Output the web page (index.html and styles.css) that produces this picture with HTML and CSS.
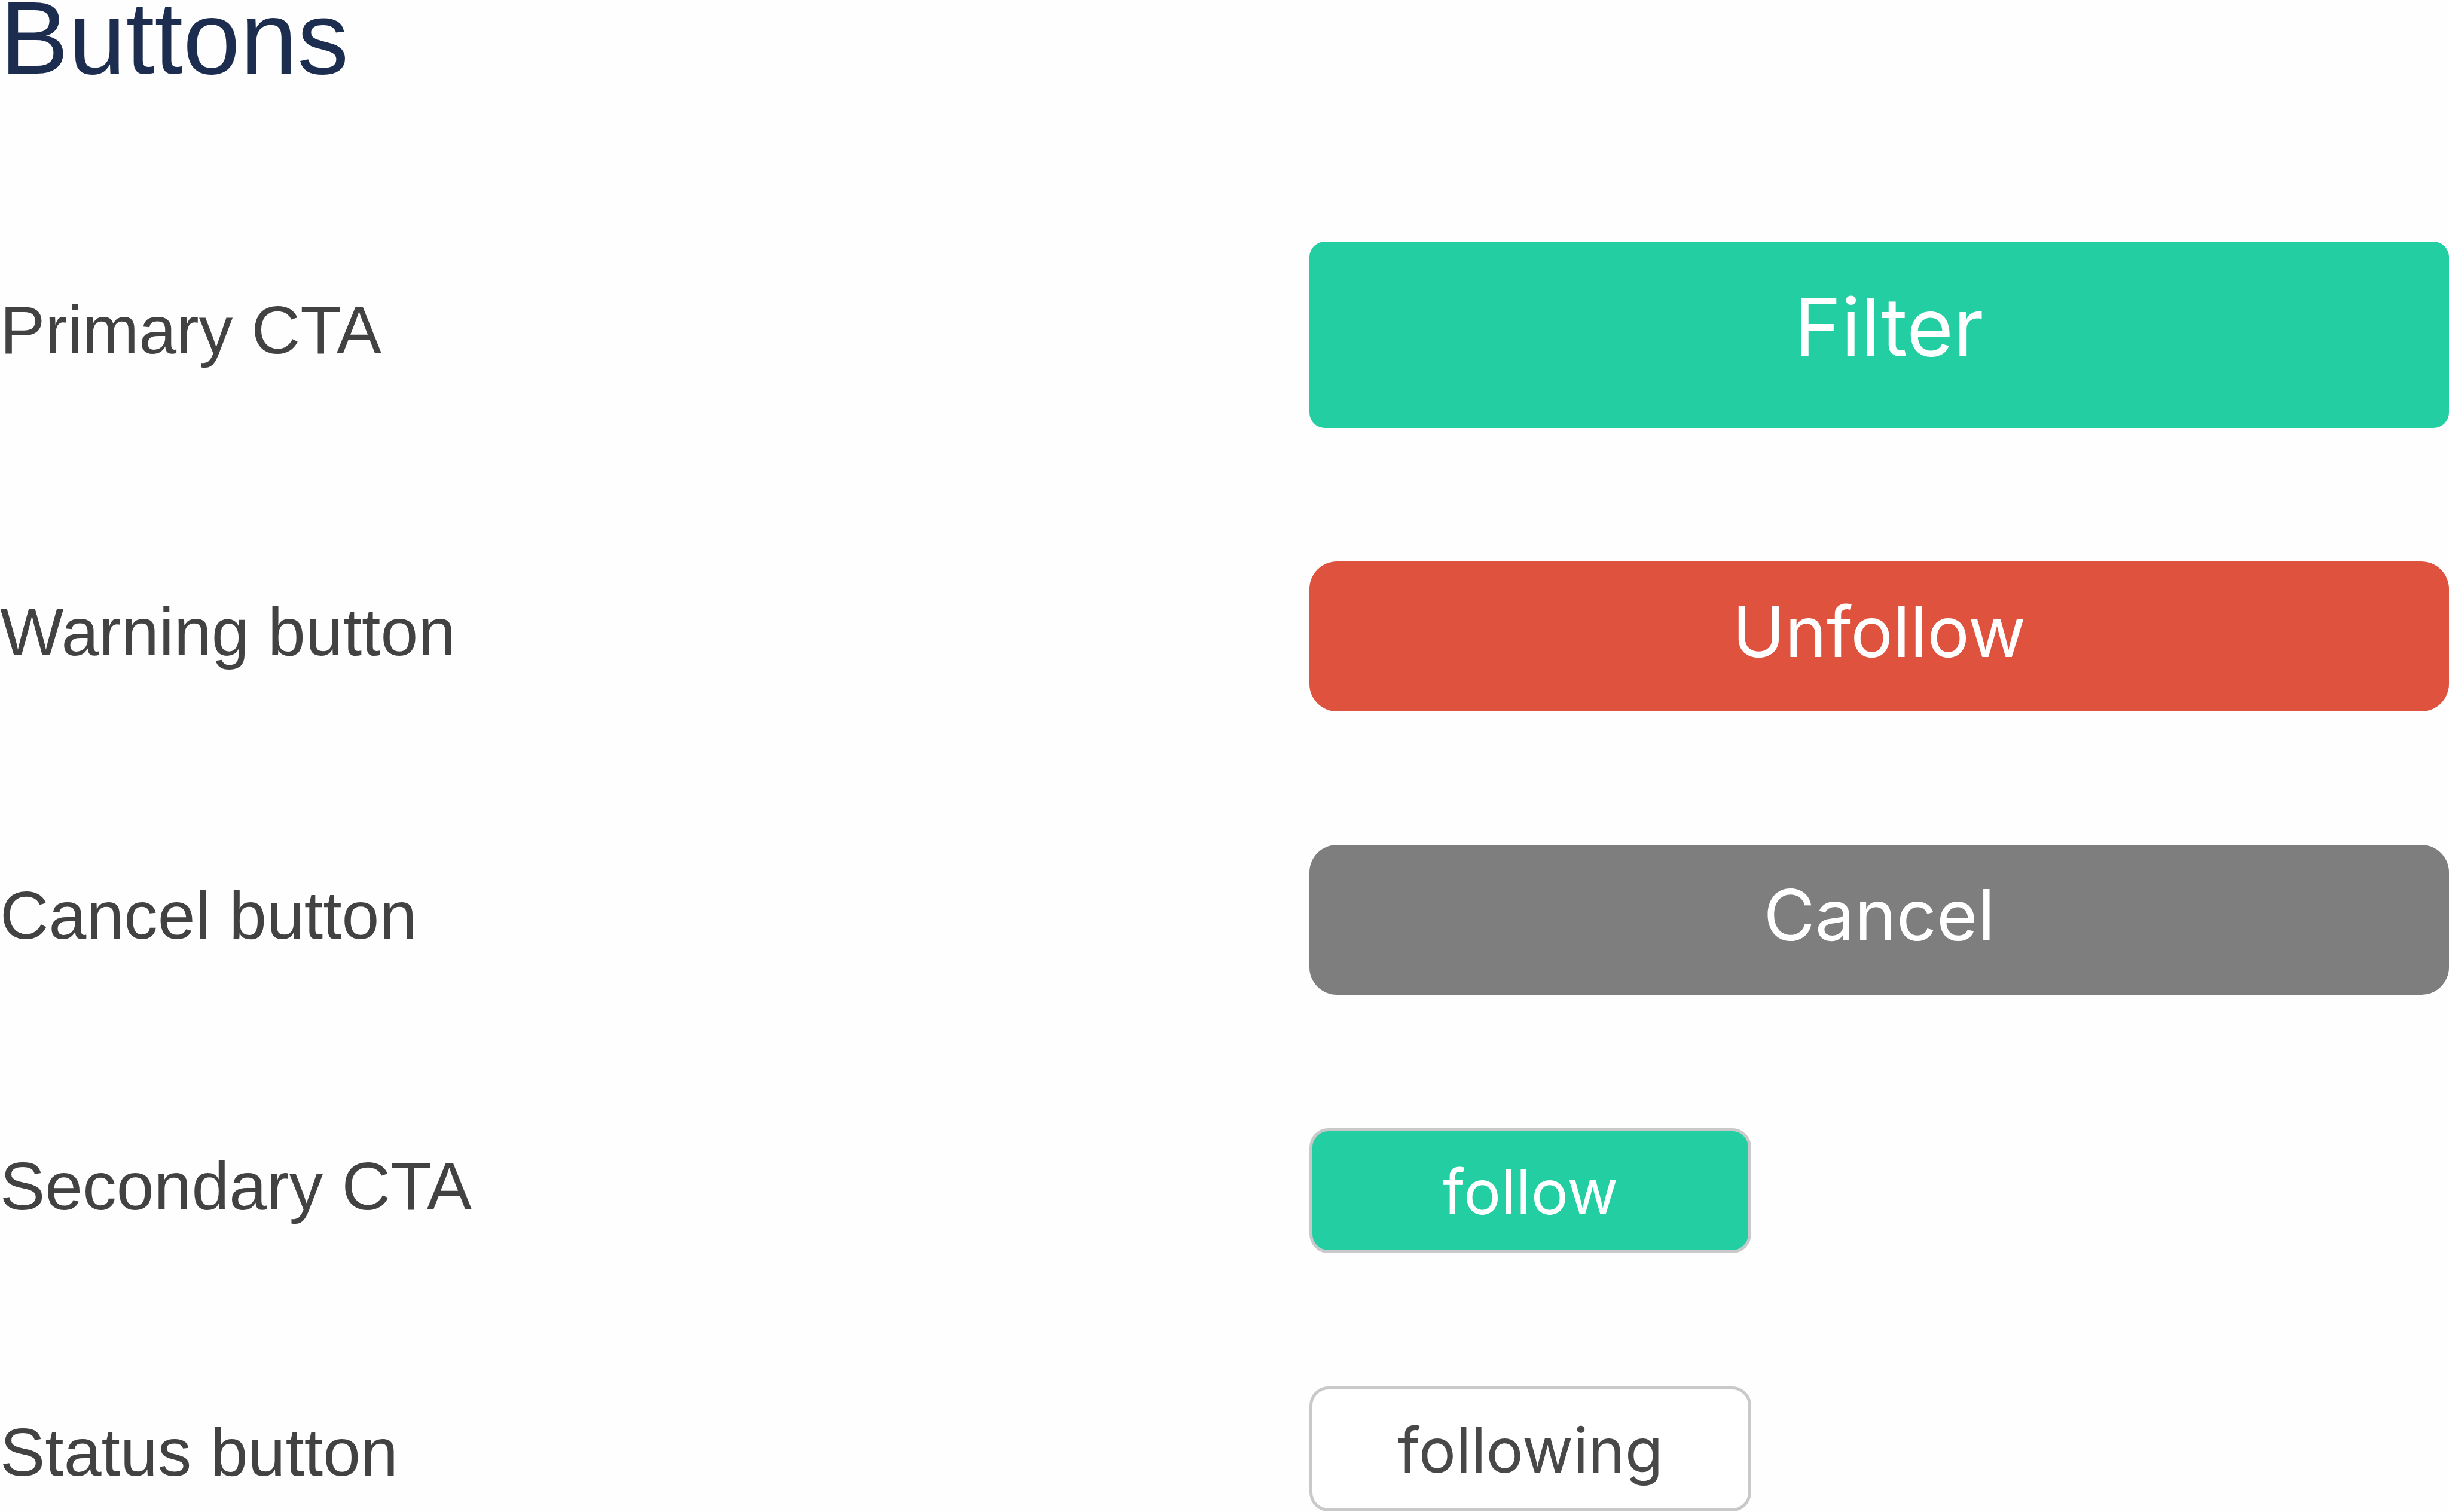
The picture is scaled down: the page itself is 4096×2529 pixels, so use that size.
FILE: index.html
```html
<!DOCTYPE html>
<html lang="en">
<head>
<meta charset="utf-8">
<title>Buttons</title>
<link rel="stylesheet" href="styles.css">
</head>
<body>
<main class="guide">
  <h1 class="guide-title">Buttons</h1>
  <div class="guide-rows">
    <div class="row">
      <span class="row-label" id="primary">Primary CTA</span>
      <button type="button" class="btn btn-primary" aria-describedby="primary">Filter</button>
    </div>
    <div class="row">
      <span class="row-label" id="warning">Warning button</span>
      <button type="button" class="btn btn-medium btn-warning" aria-describedby="warning">Unfollow</button>
    </div>
    <div class="row">
      <span class="row-label" id="cancel">Cancel button</span>
      <button type="button" class="btn btn-medium btn-cancel" aria-describedby="cancel">Cancel</button>
    </div>
    <div class="row">
      <span class="row-label" id="secondary">Secondary CTA</span>
      <button type="button" class="btn btn-small btn-secondary" aria-describedby="secondary">follow</button>
    </div>
    <div class="row">
      <span class="row-label row-label-low" id="status">Status button</span>
      <button type="button" class="btn btn-small btn-status" aria-describedby="status">following</button>
    </div>
  </div>
</main>
</body>
</html>
```
FILE: styles.css
```css
* {
  box-sizing: border-box;
}

body {
  margin: 0;
  background: #fefefe;
  color: #424242;
  font-family: "Liberation Sans", Arial, sans-serif;
}

.guide {
  display: flex;
  flex-direction: column;
  gap: 278px;
}

.guide-title {
  margin: 0;
  color: #1d2d50;
  font-size: 172px;
  font-weight: 400;
  line-height: 126px;
}

.guide-rows {
  display: flex;
  flex-direction: column;
  gap: 223px;
}

.row {
  display: grid;
  grid-template-columns: 2190fr 1906fr;
  align-items: center;
}

.row-label {
  padding-bottom: 16px;
  font-size: 113px;
  line-height: 126px;
}

.row-label-low {
  padding: 10px 0 0;
}

.btn {
  border: 0;
  color: #fff;
  font-family: Inter, sans-serif;
  font-weight: 400;
  text-align: center;
}

.btn-primary {
  padding: 58px 0 86px 32px;
  border-radius: 26px;
  background: #22cea2;
  font-size: 134px;
  line-height: 168px;
}

.btn-medium {
  padding: 42px 0 58px;
  border-radius: 46px;
  font-size: 118px;
  line-height: 151px;
}

.btn-warning {
  background: #df533e;
}

.btn-cancel {
  background: #7e7e7e;
}

.btn-small {
  justify-self: start;
  min-width: 739px;
  padding: 36px 0 32px;
  border: 5px solid #c9c9c9;
  border-radius: 32px;
  font-size: 104px;
  line-height: 131px;
}

.btn-secondary {
  background: #22cea2;
}

.btn-status {
  background: #fff;
  color: #484848;
}
```
